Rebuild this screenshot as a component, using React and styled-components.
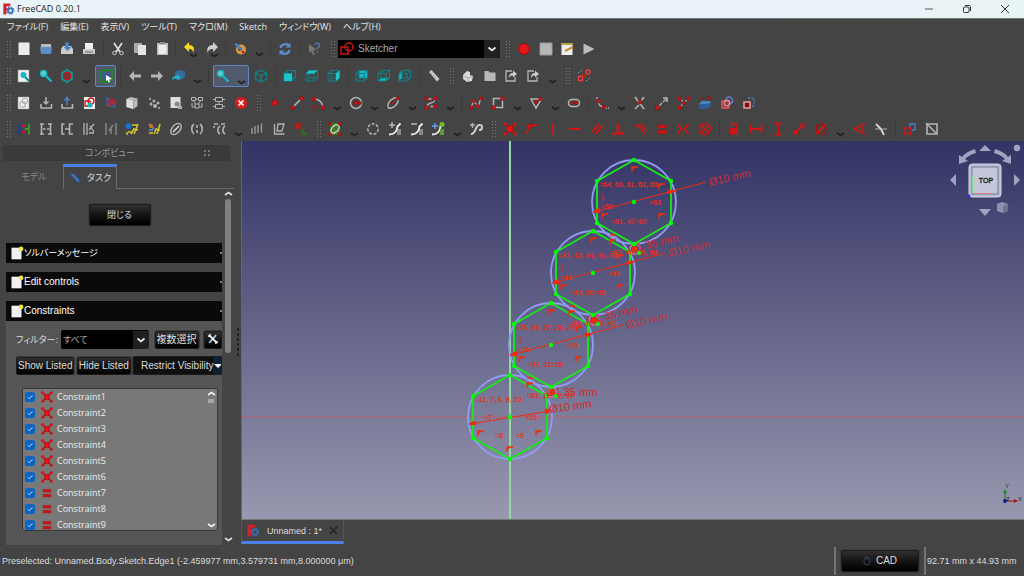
import React from 'react';
import styled, { createGlobalStyle, css } from 'styled-components';

const RED = '#d01515';
const DARK_RED = '#a31010';
const GREY = '#b4b4b4';
const TEAL = '#18b9c0';
const BLUE = '#4a80c4';
const SKETCH_RED = '#f02a0c';

const GlobalStyle = createGlobalStyle`
  * {
    box-sizing: border-box;
  }

  body {
    margin: 0;
    background: #444;
  }

  button, input, select {
    font: inherit;
    color: inherit;
  }
`;

const Window = styled.div`
  display: flex;
  flex-direction: column;
  min-height: 100vh;
  background: #444;
  color: #ddd;
  font-family: "Liberation Sans", "Noto Sans CJK JP", sans-serif;
  font-feature-settings: "palt";
  font-size: 10px;
  line-height: 14px;
`;

const TitleBar = styled.header`
  display: flex;
  align-items: center;
  height: 19px;
  padding-left: 1px;
  background: linear-gradient(90deg, #e9f4f8, #eaf2fa 60%, #e9f4f6);
  border-bottom: 1px solid #777;
  color: #222;
  font-family: "Open Sans", sans-serif;
`;

const AppTitle = styled.h1`
  flex: 1;
  margin: 0 0 0 2px;
  font-size: 9px;
  font-weight: 400;
`;

const CaptionButton = styled.button`
  display: grid;
  place-items: center;
  width: 38px;
  height: 18px;
  padding: 0;
  border: 0;
  background: none;
  color: #333;
`;

const MenuBar = styled.nav`
  display: flex;
  gap: 12px;
  height: 16px;
  padding-left: 7px;
  font-family: "Open Sans", "Noto Sans CJK JP", sans-serif;
`;

const MenuItem = styled.button`
  padding: 0;
  border: 0;
  background: none;
  color: #e4e4e4;
  font-size: 9px;
  line-height: 16px;
  white-space: nowrap;
`;

const Toolbars = styled.div`
  display: flex;
  flex-direction: column;
`;

const ToolRow = styled.div`
  display: flex;
  align-items: center;
  height: 27px;
  padding-left: 5px;

  &:last-child {
    height: 25px;
  }
`;

const Tool = styled.button`
  position: relative;
  display: flex;
  align-items: center;
  justify-content: center;
  flex: none;
  width: 22px;
  height: 22px;
  padding: 0;
  border: 1px solid transparent;
  border-radius: 2px;
  background: none;

  &:nth-child(3n) {
    width: 21px;
  }

  ${({ $active }) => $active && css`
    margin: 0 1px;
    border-color: #6286c4;
    background: #515a6c;
  `}

  ${({ $wide }) => $wide && css`
    && {
      width: 36px;
    }
    justify-content: flex-start;
  `}
`;

const Separator = styled.span`
  flex: none;
  width: 1px;
  height: 16px;
  margin: 0 3px;
  background: #3b3b3b;
`;

const Grip = styled.span`
  flex: none;
  width: 5px;
  height: 18px;
  margin: 0 3px 0 5px;
  background: radial-gradient(circle, #777 1px, transparent 1px) 0 0 / 3px 3px;

  &:first-child {
    margin: 0 2px 0 1px;
  }
`;

const DropArrow = styled.button`
  display: flex;
  align-items: flex-end;
  justify-content: center;
  flex: none;
  width: 16px;
  height: 18px;
  padding: 0;
  border: 0;
  background: none;
`;

const ArrowOverlay = styled.span`
  position: absolute;
  right: 2px;
  bottom: 0;
  display: flex;
`;

const WorkbenchBox = styled.label`
  display: flex;
  align-items: center;
  flex: none;
  width: 162px;
  height: 18px;
  background: #000;
`;

const DarkSelect = styled.select`
  flex: 1;
  min-width: 0;
  height: 100%;
  padding: 0 0 0 2px;
  border: 0;
  border-radius: 2px;
  appearance: none;
  background: url('data:image/svg+xml;utf8,<svg xmlns="http://www.w3.org/2000/svg" width="16" height="18"><rect width="16" height="18" fill="%23202020"/><path d="M4.500 7.500l3.500 3 3.500-3" fill="none" stroke="%23eee" stroke-width="1.700"/></svg>') right center no-repeat #000;
  color: #aaa;
  font-size: ${({ $small }) => ($small ? '9px' : '10px')};
`;

const Workspace = styled.div`
  display: flex;
  flex: 1;
`;

const Dock = styled.aside`
  display: flex;
  flex-direction: column;
  flex: none;
  width: 234px;
`;

const DockTitle = styled.div`
  display: flex;
  align-items: center;
  height: 16px;
  margin: 4px 4px 3px 3px;
  padding-right: 19px;
  background: #3a3a3a;
  color: #999;
  font-size: 9px;

  span {
    flex: 1;
    padding-left: 14px;
    text-align: center;
  }
`;

const TabList = styled.div`
  display: flex;
  height: 25px;
  border-bottom: 1px solid #6a6a6a;
`;

const DockTab = styled.button`
  display: flex;
  align-items: center;
  justify-content: center;
  gap: 6px;
  width: ${({ $active }) => ($active ? '54px' : '63px')};
  height: 25px;
  padding: ${({ $active }) => ($active ? '0' : '0 0 0 5px')};
  border: ${({ $active }) => ($active ? '1px solid #6a6a6a' : '0')};
  border-top: ${({ $active }) => ($active ? '3px solid #4c7fe8' : '0')};
  border-bottom: 0;
  background: #444;
  color: ${({ $active }) => ($active ? '#ddd' : '#888')};
  font-size: 9px;
`;

const DockScroll = styled.div`
  display: flex;
  flex: 1;
  padding-left: 6px;
`;

const TaskColumn = styled.div`
  display: flex;
  flex-direction: column;
  flex: 1;
  min-width: 0;
`;

const ScrollBar = styled.div`
  display: flex;
  flex-direction: column;
  align-items: center;
  flex: none;
  width: 12px;
  padding: 1px 0 2px;

  span {
    width: 6px;
    height: 154px;
    margin: 2px 0 auto;
    border-radius: 3px;
    background: #808080;
  }
`;

const darkButton = css`
  border: 1px solid #1c1c1c;
  border-radius: 2px;
  background: linear-gradient(#303030, #121212 55%, #000);
  box-shadow: 0 0 0 1px #3c3c3c;
  color: #ddd;
`;

const CloseButton = styled.button`
  ${darkButton}
  align-self: center;
  width: 62px;
  height: 22px;
  margin: 15px 0 17px 11px;
  padding: 0;
  font-size: 9px;
`;

const SectionHeader = styled.h2`
  display: flex;
  align-items: center;
  height: 20px;
  margin: 0 0 ${({ $open }) => ($open ? '0' : '9px')};
  padding-left: 3px;
  background: #0a0a0a;
  color: #fff;
  font-size: 10px;
  font-weight: 400;

  span {
    flex: 1;
  }

  span:lang(ja) {
    font-size: 9px;
  }
`;

const CollapseMark = styled.i`
  width: 2px;
  height: 2px;
  border-radius: 1px;
  background: #aaa;
`;

const SectionBody = styled.div`
  display: flex;
  flex: 1;
  flex-direction: column;
  gap: 7px;
  padding: 9px 0 0 10px;
  background: #555;
`;

const ControlRow = styled.div`
  display: flex;
  align-items: center;
  justify-content: space-between;
  height: 19px;
  overflow: hidden;
`;

const FilterField = styled.div`
  display: flex;
  align-items: center;
  width: 133px;
  height: 19px;
`;

const FilterLabel = styled.label`
  width: 45px;
  font-size: 9px;
  white-space: nowrap;
`;

const SmallButton = styled.button`
  ${darkButton}
  flex: none;
  height: 18px;
  padding: 0 1px;
  line-height: 16px;
  white-space: nowrap;
`;

const VisibilityButton = styled(SmallButton)`
  display: flex;
  align-items: center;
  justify-content: space-between;
  width: 89px;
  height: 19px;
  padding: 0 0 0 7px;
  background: linear-gradient(90deg, transparent 79px, #0c2236 79px), #101010;
`;

const ConstraintPanel = styled.div`
  display: flex;
  height: 143px;
  margin: 6px 4px 0 6px;
  border: 1px solid #383838;
  border-radius: 2px;
  background: #787878;
  overflow: hidden;
`;

const ConstraintList = styled.ul`
  flex: 1;
  margin: 0;
  padding: 0;
  list-style: none;
  color: #eee;
  font-family: "Open Sans", sans-serif;
  font-size: 9px;
`;

const ConstraintRow = styled.li`
  label {
    display: flex;
    align-items: center;
    height: 16px;
    padding-left: 2px;
  }

  svg {
    margin: 0 2px 0 4px;
  }
`;

const CheckBox = styled.input`
  width: 10px;
  height: 10px;
  margin: 0;
  border-radius: 2px;
  appearance: none;
  background: url('data:image/svg+xml;utf8,<svg xmlns="http://www.w3.org/2000/svg" width="10" height="10"><path d="M2.800 5.200l1.500 1.500 3-3.200" fill="none" stroke="%23cfe4f7"/></svg>') center no-repeat #0a66c2;
`;

const ListScroll = styled.div`
  display: flex;
  flex-direction: column;
  align-items: center;
  width: 12px;
  padding: 1px 0;

  span {
    width: 6px;
    height: 4px;
    margin: 2px 0 auto;
    background: #a8a8a8;
  }
`;

const Splitter = styled.div`
  display: flex;
  align-items: center;
  justify-content: center;
  width: 7px;

  span {
    width: 2px;
    height: 30px;
    background: repeating-linear-gradient(#222 0 3px, transparent 3px 5px);
  }
`;

const Documents = styled.main`
  display: flex;
  flex: 1;
  flex-direction: column;
  min-width: 0;
`;

const Viewport = styled.div`
  display: flex;
  flex: 1;
  border-left: 1px solid #667;
  border-bottom: 1px solid #777;
  background: linear-gradient(#333365, #9898b0);
`;

const Canvas = styled.svg`
  display: block;
  width: 100%;
  height: 100%;
`;

const DocumentTabs = styled.div`
  display: flex;
  height: 25px;
`;

const DocumentTab = styled.button`
  display: flex;
  align-items: center;
  width: 103px;
  height: 24px;
  padding: 0 5px 0 3px;
  border: 1px solid #555;
  border-top: 0;
  border-bottom: 3px solid #4c7fe8;
  background: #444;
  color: #ddd;
  font-size: 9px;

  span {
    flex: 1;
  }
`;

const StatusBar = styled.footer`
  display: flex;
  align-items: center;
  height: 31px;
  padding: 0 10px 0 2px;
  font-size: 9px;

  p {
    flex: 1;
    margin: 0;
  }
`;

const StatusDivider = styled.span`
  width: 2px;
  height: 28px;
  background: #757575;
`;

const NavButton = styled.button`
  ${darkButton}
  display: flex;
  align-items: center;
  justify-content: center;
  gap: 5px;
  width: 78px;
  height: 22px;
  margin: 0 5px;
  padding: 0;
  font-size: 10px;
`;

const StatusSize = styled.output`
  width: 88px;
  padding-left: 1px;
  white-space: nowrap;
`;

const Dot = ({ x, y, r = 2, c = RED }) => <circle cx={x} cy={y} r={r} fill={c} stroke="#7a0c0c" strokeWidth=".5" />;

const Line = ({ d, c = GREY, w = 1.3, dash }) => (
  <path d={d} fill="none" stroke={c} strokeWidth={w} strokeDasharray={dash} />
);

const Cube = ({ fill, back }) => (
  <>
    {back && <path d={fill} fill={TEAL} />}
    <Line d="M3 6.500h8v7.500h-8zM3 6.500l3-3h8.500l-3.500 3M14.500 3.500v7.500l-3.500 3M6 3.500v7.500h8.500M6 11l-3 3" c="#108087" w={1} />
    {!back && <path d={fill} fill="#1cc4cb" />}
  </>
);

const Page = ({ x = 3, y = 3 }) => <path d={`M${x} ${y}h11v12h-11z`} fill="#eee" stroke="#999" strokeWidth=".5" />;

const Arc = ({ children }) => (
  <>
    <path d="M11 9h4v6h-4z" fill="#888" />
    <Line d="M3 14.500c5 0 8-3 8.500-8l3-3" c="#e8e8e8" w={2} />
    {children}
  </>
);

// every drawing uses an 18 x 18 box
const icons = {
  newDoc: <path d="M3.500 2.500h11v12.500h-11z" fill="#ececec" />,
  open: <><path d="M4 4h10v6h-10z" fill="#bbb" /><path d="M3 7h12l-1 7h-10z" fill="#5e8ec4" /></>,
  save: <><path d="M3 9l2-3h8l2 3v5h-12z" fill="#ccc" /><path d="M7 2l4 1v4h2.500l-4 4-4-4h2z" fill={BLUE} /></>,
  print: <><path d="M5 3h8v6h-8z" fill="#eee" /><path d="M3 9h12v5h-12z" fill="#ccc" /><path d="M5 12h8" stroke="#666" /></>,
  cut: <><Line d="M5 3l6 9M13 3l-6 9" c="#e4e4e4" w={1.600} /><circle cx="5.500" cy="13" r="1.800" fill="none" stroke="#ccc" /><circle cx="12.500" cy="13" r="1.800" fill="none" stroke="#ccc" /></>,
  copy: <><path d="M3 3h8v10h-8z" fill="#aaa" /><path d="M7 5h8v10h-8z" fill="#e4e4e4" /></>,
  paste: <><path d="M4 3h11v12h-11z" fill="#bbb" /><path d="M7 2h5v2h-5z" fill="#888" /><path d="M5.500 5h8v9h-8z" fill="#eee" /></>,
  undo: <path d="M3 7l5-5v3c5 0 6 4 4 8 0-3-1-4-4-4v3z" fill="#f4d820" />,
  redo: <path d="M15 7l-5-5v3c-5 0-7 4-5 8 0-3 2-4 5-4v3z" fill="#ccc" />,
  palette: <><circle cx="10" cy="9.500" r="5" fill="#db9a3f" /><circle cx="9" cy="9" r="2" fill="#444" /><path d="M3 4l3-1 6 7-2 1z" fill={BLUE} /><circle cx="12" cy="12" r="1.300" fill={RED} /></>,
  refresh: <><Line d="M4.500 8a5 4.500 0 0 1 9-2M13.500 10a5 4.500 0 0 1-9 2" c="#5a8fd6" w={2.200} /><path d="M14.500 3v4.500h-5zM3.500 15v-4.500h5z" fill="#5a8fd6" /></>,
  whatsThis: <><path d="M4 4l8 6-4 .5 2 4-2 .6-2-4-2 2z" fill="#777" /><Line d="M10 5c0-2.500 5-2.500 4.500.5-.3 1.500-2 1.500-2 3.500M12.500 11v1.500" c="#4e7aa8" w={1.600} /></>,
  record: <circle cx="9" cy="9" r="5.500" fill="#e01818" stroke="#8f1010" />,
  stop: <path d="M3 3h12v12h-12z" fill="#b6b6b6" stroke="#999" />,
  macroEdit: <><path d="M3.500 3h11v12h-11z" fill="#eee" /><path d="M3.500 3h11v2h-11z" fill="#b8a24a" /><Line d="M7 11l8-4" c="#c98a3a" w={2} /></>,
  play: <path d="M3.500 3.500l11 5.500-11 5.500z" fill="#bcbcbc" />,
  fitAll: <><Page /><circle cx="8.500" cy="8" r="3" fill={TEAL} /><Line d="M10 10l4 4" c="#0c8a90" w={2} /></>,
  zoom: <><circle cx="6.500" cy="6.500" r="3" fill="#6cc" stroke={TEAL} strokeWidth="1.500" /><Line d="M9 9l5.500 5.500" c={TEAL} w={2.400} /></>,
  drawStyle: <><path d="M9 3l5 3v6l-5 3-5-3v-6z" fill="none" stroke="#14979e" strokeWidth="1.600" /><circle cx="9" cy="9" r="3.500" fill="none" stroke={RED} strokeWidth="1.300" /><Line d="M6.500 6.500l5 5" c={RED} /></>,
  boxSelect: <><path d="M3 6l4-3h8v8l-3 4h-9z" fill="none" stroke="#1c8a2c" strokeWidth="1.800" /><circle cx="9" cy="9" r="4" fill="#385f94" /><path d="M9 8l6 4-3 .5 1 2.500-1.500.5-1-2.500-1.500 1z" fill="#fff" /></>,
  back: <path d="M3 9l5-5v3.500h7v3h-7v3.500z" fill="#b4b4b4" />,
  forward: <path d="M15 9l-5-5v3.500h-7v3h7v3.500z" fill="#b4b4b4" />,
  linkGo: <><path d="M6 5l4-2 6 1v6l-4 3-6-1z" fill="#356b9c" /><path d="M3 14c0-4 2-5 5-5v-2l4 3.500-4 3v-2c-2 0-4 0-5 2.500z" fill={TEAL} /></>,
  iso: <Line d="M9 3l5.500 3v6l-5.500 3-5.500-3v-6zM3.500 6l5.500 3 5.500-3M9 9v6" c="#108087" />,
  front: <Cube fill="M3 6.500h8v7.500h-8z" />,
  top: <Cube fill="M3 6.500l3-3h8.500l-3.500 3z" />,
  right: <Cube fill="M14.500 3.500v7.500l-3.500 3v-7.500z" />,
  rear: <Cube back fill="M6 3.500h8.500v7.500h-8.500z" />,
  bottom: <Cube back fill="M6 11h8.500l-3.500 3h-8z" />,
  left: <Cube back fill="M6 3.500v7.500l-3 3v-7.500z" />,
  measure: <><path d="M4 5l2.500-2 8 9-2.500 2.500z" fill="#ccc" /><Line d="M6 7l1.500-1M8 9l1.500-1M10 11l1.500-1" c="#777" w={.7} /></>,
  part: <><path d="M4 8l4-4 3 1v3l3 1-1 5-5 1-4-3z" fill="#d8d8d8" /><Line d="M4 9l5 2 4-1.500M9 11v3" c="#999" w={.7} /></>,
  group: <path d="M3.500 4h4l1 1.500h6v8.500h-11z" fill="#b8b8b8" />,
  linkMake: <><Line d="M10 4h-6v10h9v-4" /><path d="M7 11c0-4 2-5 4-5v-2.500l4 3.500-4 3.500v-2c-2 0-3 .5-4 2.500z" fill="#ccc" /></>,
  validate: <><path d="M3.500 9.500h4v4h-4z" fill="none" stroke="#f23c3c" strokeWidth="1.300" /><circle cx="9" cy="9" r="2" fill={RED} /><circle cx="13" cy="5" r="2" fill="none" stroke="#f23c3c" strokeWidth="1.300" /><Line d="M3 6l4-3M11 14l4-3" w={.8} dash="1.500" /></>,
  sketchNew: <><Page /><circle cx="10" cy="7" r="2.800" fill="none" stroke="#aaa" /><path d="M5 8h5v5h-5z" fill="none" stroke="#aaa" /></>,
  importBox: <><Line d="M4 10v4h10.500v-4" w={1.600} /><Line d="M9 3v7M6.500 7.500l2.500 2.500 2.500-2.500" w={1.500} /></>,
  exportBox: <><Line d="M4 10v4h10.500v-4" w={1.600} /><Line d="M9 11v-7M6.500 6.500l2.500-3 2.500 3" c={BLUE} w={1.600} /></>,
  sketchView: <><path d="M4 3h11v12h-11z" fill="#eee" /><circle cx="11" cy="7" r="3" fill="none" stroke={RED} strokeWidth="1.300" /><path d="M5 7h5v5h-5z" fill="none" stroke={RED} strokeWidth="1.300" /><circle cx="10" cy="11" r="2.500" fill={TEAL} /></>,
  attach: <><path d="M4 3l10 3v8l-10-2z" fill="#365f91" /><circle cx="10" cy="8" r="2.500" fill="none" stroke={RED} strokeWidth="1.300" /><path d="M6 7h4v4h-4z" fill="none" stroke={RED} /></>,
  solid: <><path d="M3.500 5l4-2 7 1.500v7.500l-4 3-7-2z" fill="#bbb" /><path d="M3.500 5l7 2v8l-7-2z" fill="#ddd" /><Line d="M10.500 7v8M10.500 7l4-2.500" c="#888" w={.7} /></>,
  points: <><circle cx="5" cy="5" r="1" fill={GREY} /><circle cx="9" cy="7" r="1.500" fill={GREY} /><circle cx="13" cy="9" r="1.500" fill={GREY} /><circle cx="6" cy="10" r="1.500" fill={GREY} /><circle cx="10" cy="12" r="2" fill={GREY} /><circle cx="14" cy="14" r="1" fill={GREY} /></>,
  pageLink: <><path d="M3.500 3h10v11h-10z" fill="#ddd" /><circle cx="10" cy="10" r="2.500" fill="#888" /><path d="M11 12h4v3h-4z" fill="#aaa" /></>,
  merge: <Line d="M3.500 3.500h4v3h-4zM10.500 3.500h4v3h-4zM7.500 5h3M5.500 7l2 3M12.500 7l-2 3M7 10h4v4h-4zM4 9v4h3M14 9v4h-3" w={1} />,
  mirror: <Line d="M5.500 3.500h7v4h-7zM3 5.500h2.500M12.500 5.500h2.500M5.500 10.500h7v4h-7zM3 12.500h2.500M12.500 12.500h2.500M9 7.500v3" w={1} />,
  cancel: <><circle cx="9" cy="9" r="6" fill="#e01a1a" /><Line d="M6.500 6.500l5 5M11.500 6.500l-5 5" c="#fff" w={1.700} /></>,
  point: <Dot x={9} y={9} r={3} />,
  line: <><Line d="M4.500 13.500l9-9" w={1.600} /><Dot x={4.500} y={13.500} /><Dot x={13.500} y={4.500} /></>,
  arc: <><Line d="M5 5c5 0 8 3 9 8" w={1.600} /><Dot x={5} y={5} /><Dot x={14} y={13.500} /><Dot x={5.500} y={13} r={1.700} /></>,
  circle: <><circle cx="9" cy="9" r="5.500" fill="none" stroke={GREY} strokeWidth="1.500" /><Dot x={9} y={9} /><Dot x={13} y={9} r={1.600} /></>,
  ellipse: <><ellipse cx="9" cy="9" rx="6.500" ry="3.500" transform="rotate(-45 9 9)" fill="none" stroke={GREY} strokeWidth="1.500" /><Dot x={8.500} y={9} r={1.600} /><Dot x={13.500} y={4.500} r={1.600} /></>,
  spline: <><Line d="M4.500 13.500c1-7 8-2 9-9M4.500 5h5M13.500 12.500h-5" /><Dot x={4.500} y={5} r={1.900} /><Dot x={13.500} y={4.500} r={1.900} /><Dot x={4.500} y={13.500} r={1.900} /><Dot x={13.500} y={12.500} r={1.900} /></>,
  polyline: <><Line d="M4 13l3-6 4 6 3-9" /><Dot x={4} y={13.500} r={1.800} /><Dot x={7} y={7} r={1.800} /><Dot x={10.500} y={12} r={1.800} /><Dot x={14} y={4.500} r={1.800} /></>,
  rect: <><path d="M4.500 4.500h9v9h-9z" fill="none" stroke={GREY} strokeWidth="1.500" /><Dot x={4.500} y={13.500} /><Dot x={13.500} y={4.500} /></>,
  triangle: <><path d="M4 5h10.500l-5.500 9z" fill="none" stroke={GREY} strokeWidth="1.500" /><Dot x={9} y={8} r={1.800} /><Dot x={13.500} y={5} r={1.800} /></>,
  slot: <><rect x="3.500" y="5.500" width="11" height="7" rx="3.500" fill="none" stroke={GREY} strokeWidth="1.500" /><Dot x={7} y={9} r={1.600} /><Dot x={11.500} y={9} r={1.600} /></>,
  fillet: <><Line d="M4 3v3M12 14h4" dash="2 1" /><Line d="M5 6c0 5 3 7 7 7" /><Dot x={5.500} y={7} /><Dot x={11} y={13} /></>,
  trim: <><Line d="M4 3l9 12M13 3l-3 4M8 11l-4 4" w={1.600} /><Dot x={9} y={8} /></>,
  extend: <><Line d="M5 13l4-4M10 8l3-3" /><Line d="M10 4h4v4" w={1.600} /><Dot x={4.500} y={13.500} r={2.300} /></>,
  split: <><Line d="M4 14l10-10M5 4l4 5" dash="2 1" /><Dot x={4.500} y={4.500} r={1.900} /><Dot x={13.500} y={4.500} r={1.900} /><Dot x={4.500} y={13.500} r={1.900} /><Dot x={9} y={9} r={1.700} /></>,
  external: <><path d="M3 10l3-3h8l1 3-3 4h-9z" fill="#4d83c0" /><path d="M3 10h8l4-1v3l-4 3h-8z" fill="#2c5f9b" /><Dot x={7} y={4} r={1} /><Dot x={13} y={4} r={1.500} /></>,
  carbon: <><circle cx="11" cy="6.500" r="3.500" fill="none" stroke="#6c7ed0" strokeWidth="1.500" /><path d="M4 7h7v7h-7z" fill="#844" stroke="#e45a5a" strokeWidth="1.300" /><circle cx="9" cy="9" r="3" fill="none" stroke="#e9a0b0" /></>,
  construct: <><path d="M4 8h6v6h-6z" fill="#7a1010" stroke="#f0a0a0" strokeWidth="1.500" /><Line d="M8 4h6v8h-3" c={BLUE} dash="2 1.500" /></>,
  coincLine: <><path d="M3 4h3v10h-3z" fill="#273e7a" /><Line d="M6 6h5M6 12h5" c={RED} w={2.200} /><Line d="M10 9h4M14 3.500v11" c="#2d9d2d" w={1.800} /></>,
  brackets: <Line d="M7 4h-2.500v10h2.500M11 4h2.500v10h-2.500M6 9h2.500M10 9h2.500M3 4h1.500M3 14h1.500M15 4h-1.500M15 14h-1.500" w={1.600} />,
  bracketOpen: <Line d="M6.500 4h-2.500v10h2.500M15 4h-3.500v10h3.500M7 9h4" w={1.600} />,
  barsX: <Line d="M4 3v12M7 3v12M9 10l5-6M10 6l4 6M9 13h5" w={1.300} />,
  bars: <Line d="M4 3v12M14 3v12M7 11l4-6M9 7v7" c="#8a8a8a" w={1.400} />,
  splineInfo: <><circle cx="5.500" cy="6" r="3" fill="#1a72c4" /><Line d="M9 5h5M5 12h4M8 14l3-5 4 1M11 14l4-10M4 12v3" c="#cfc12c" w={1.600} /></>,
  splineEdit: <><Line d="M4 4l5 5M4 10h4" c={BLUE} w={2} /><Line d="M9 14l2-5 4 1M12 14l3-10M4 13h4" c="#cfc12c" w={1.600} /><circle cx="6" cy="6" r="2" fill="#e07018" /></>,
  ring: <><ellipse cx="9" cy="9" rx="6.500" ry="4" transform="rotate(-50 9 9)" fill="none" stroke={GREY} strokeWidth="1.500" /><Line d="M6 12l6-6" c="#eee" /></>,
  brackets2: <Line d="M6 4c-3 2-3 8 0 10M12 4c3 2 3 8 0 10M9 5v3M9 10v3" w={1.600} />,
  brackets3: <Line d="M4 4h4M10 6c-3 2-3 6 0 8M15 6c-3 2-3 6 0 8M3 7h2M11 4h4" w={1.600} />,
  bars3: <Line d="M4 8v6M7 6v8M10 5v8M13.500 3.500v9" c="#999" w={1.400} />,
  axisCopy: <><Line d="M4.500 4v10h10" w={1.300} /><Line d="M8 4h6l-2 7h-5z" /></>,
  deleteAll: <><Line d="M3 3l6 6M9 3l-6 6" c={RED} w={2} /><path d="M9 9h3v3h3v3h-6z" fill="#2e6b22" /></>,
  bspline: <><path d="M4 3h10v12h-10z" fill="#3e7a2a" /><ellipse cx="9" cy="9" rx="5" ry="3" transform="rotate(-45 9 9)" fill="none" stroke="#ddd" strokeWidth="1.300" /><Dot x={4} y={4} r={1.600} /><Dot x={14} y={4} r={1.600} /><Dot x={4} y={14} r={1.600} /><Dot x={14} y={14} r={1.600} /></>,
  dashedRing: <circle cx="9" cy="9" r="5.200" fill="none" stroke={GREY} strokeWidth="1.500" strokeDasharray="3 1.500" />,
  knotAdd: <Arc><Line d="M3 5h6M6 2v6" w={1.500} /></Arc>,
  knotDel: <Arc><Line d="M3 4h6" w={1.500} /></Arc>,
  knotBlue: <Arc><Line d="M3 6h6M6 3v6" c="#5b91d8" w={1.800} /><circle cx="13" cy="4.500" r="2.500" fill="#6fbe2c" /><path d="M11 9h4v6h-4z" fill="#5a9a2a" /></Arc>,
  join: <><Line d="M3 5h5M5.500 3v5" w={1.400} /><Line d="M4 14c5 0 4-8 8-9s4 5 0 5" c="#ccc" w={2} /></>,
  coincident: <><Line d="M4 4l10 10M14 4l-10 10" c={DARK_RED} w={1.500} /><Line d="M3 3l2.500 2.500M15 3l-2.500 2.500M3 15l2.500-2.500M15 15l-2.500-2.500" c={RED} w={2.800} /><circle cx="9" cy="9" r="3.200" fill="#e81010" stroke={DARK_RED} strokeWidth=".5" /></>,
  onCurve: <><Line d="M4 14c0-6 4-9 10-9" c={RED} w={1.800} /><Dot x={6} y={6} r={2.300} /></>,
  vertical: <Line d="M9 3.500v11" c={RED} w={2} />,
  horizontal: <Line d="M3.500 9h11" c={RED} w={2} />,
  parallel: <Line d="M4 12l7-8M7.500 14l7-8" c={RED} w={2} />,
  perpendicular: <Line d="M9 3.500v10M3.500 13.500h11" c={RED} w={2.400} />,
  tangent: <Line d="M3.500 4.500l6 3 5 7M8 4c4 1 6 3 7 6" c={RED} w={1.800} />,
  equal: <path d="M4.500 5h9v3h-9zM4.500 10.500h9v3h-9z" fill={RED} stroke={DARK_RED} strokeWidth=".5" />,
  symmetric: <Line d="M3.500 4l4 5-4 5M14.500 4l-4 5 4 5" c={RED} w={1.900} />,
  block: <><circle cx="9" cy="9" r="5.500" fill="none" stroke={RED} strokeWidth="1.500" /><Line d="M5 5l8 8M13 5l-8 8" c={RED} /></>,
  lock: <><path d="M5 8h8v6.500h-8z" fill={RED} /><Line d="M6.500 8v-2.500c0-3 5-3 5 0v2.500" c={RED} w={1.500} /></>,
  hDist: <Line d="M3.500 5v8M14.500 5v8M3.500 9h11" c={RED} w={1.800} />,
  vDist: <Line d="M5.500 3.500h7M5.500 14.500h7M9 3.500v11" c={RED} w={1.800} />,
  dist: <><Line d="M5 13l8-8" c={RED} w={2} /><path d="M9 3.500h5.500v5.500zM3.500 9v5.500h5.500z" fill={RED} /></>,
  diameter: <><circle cx="9" cy="9" r="5" fill="none" stroke={DARK_RED} strokeWidth="1.700" /><Line d="M4 14l10-10" c={RED} w={1.800} /></>,
  angle: <Line d="M15 4l-11 5 11 5M11 6c1.500 2 1.500 4 0 6" c={RED} w={1.500} />,
  snell: <><Line d="M3 9h12" c="#888" w={1.600} /><Line d="M4 4l5 5 3 6" c="#d8d8d8" w={1.800} /></>,
  driving: <><path d="M9 4h5v6h-5z" fill="none" stroke={BLUE} strokeWidth="1.300" /><path d="M4 8h6v6h-6z" fill="#444" stroke={RED} strokeWidth="1.600" /></>,
  activate: <><path d="M4 4h10v10h-10z" fill="none" stroke={GREY} strokeWidth="1.600" /><Line d="M3 3l11 11" w={1.500} /></>,
  sketcher: <><path d="M3 7h7v7h-7z" fill="none" stroke={RED} strokeWidth="1.500" /><circle cx="11" cy="7" r="4" fill="none" stroke={RED} strokeWidth="1.500" /></>,
  note: <><path d="M3 2h12v14h-12z" fill="#f2f2f2" /><circle cx="14.500" cy="3.500" r="2.800" fill="#f5e63c" /></>,
  pencil: <path d="M2 4l4-3 9 9 2 6-5.500-1.500z" fill="#3f72ac" stroke="#1c3d63" strokeWidth=".8" />,
  tools: <><Line d="M4 14l9-10" c="#9fc7f0" w={2.200} /><Line d="M4 4l10 10" c="#fff" w={2.200} /><Line d="M3 6l3-3M12 15l3-3" c="#fff" w={2} /></>,
  logo: <><path d="M3 2h9v3.500h-5v2.500h4v3h-4v5h-4z" fill="#d8202a" /><circle cx="12" cy="11" r="3" fill="none" stroke="#3b6cb0" strokeWidth="2" /><circle cx="12" cy="11" r="4.600" fill="none" stroke="#3b6cb0" strokeWidth="1.400" strokeDasharray="1.800 1.800" /></>,
};

const Icon = ({ name, size = 18 }) => (
  <svg width={size} height={size} viewBox="0 0 18 18" aria-hidden="true">{icons[name]}</svg>
);

const Chevron = ({ color = '#222', up }) => (
  <svg width="9" height="7" viewBox="0 0 9 7" aria-hidden="true">
    <path d={up ? 'M1 5l3.500-2.500 3.500 2.500' : 'M1 2l3.500 2.500 3.500-2.500'} fill="none" stroke={color} strokeWidth="1.800" />
  </svg>
);

// "|" separator, ":" grip, "v" drop arrow; "+" overlays an arrow, "!" marks a pressed tool
const rows = [
  ': newDoc open save print | cut copy paste | undo+ redo+ | palette v | refresh | whatsThis : workbench : record stop macroEdit play',
  ': fitAll zoom drawStyle v boxSelect! | back forward linkGo v | zoom!+ iso | front top right | rear bottom left | measure : part group linkMake linkMake v : validate',
  ': sketchNew importBox exportBox sketchView attach solid points pageLink merge mirror cancel : point line arc v circle v ellipse v spline v | polyline rect v triangle v slot | fillet v trim extend split external carbon construct',
  ': coincLine brackets bracketOpen barsX bars splineInfo splineEdit ring brackets2 brackets3 v bars3 axisCopy deleteAll : bspline v dashedRing knotAdd knotDel knotBlue v join : coincident onCurve vertical horizontal parallel perpendicular tangent equal symmetric block | lock hDist vDist dist diameter v angle snell | driving activate',
];

function renderTool(token, i) {
  if (token === '|') return <Separator key={i} />;
  if (token === ':') return <Grip key={i} />;
  if (token === 'v') return <DropArrow key={i} aria-label="More"><Chevron /></DropArrow>;
  if (token === 'workbench') {
    return (
      <WorkbenchBox key={i}>
        <Icon name="sketcher" />
        <DarkSelect aria-label="Workbench" defaultValue="Sketcher"><option>Sketcher</option></DarkSelect>
      </WorkbenchBox>
    );
  }
  const name = token.replace(/[!+]/g, '');
  const active = token.includes('!');
  const arrow = token.includes('+');
  return (
    <Tool key={i} aria-label={name} $active={active} $wide={active && arrow}>
      <Icon name={name} />
      {arrow && <ArrowOverlay><Chevron /></ArrowOverlay>}
    </Tool>
  );
}

const menus = ['ファイル(F)', '編集(E)', '表示(V)', 'ツール(T)', 'マクロ(M)', 'Sketch', 'ウィンドウ(W)', 'ヘルプ(H)'];

const hexagons = [
  { x: 510, y: 417, top: '=11, 7, 8, 9, 10', left: '=7', right: '=10' },
  { x: 551, y: 345, top: '=30, 26, 27, 28, 29', left: '=26', right: '=29', low: '=27, 11=28', joint: '=81, 11=82, 92', flat: true },
  { x: 593, y: 273, top: '=47, 43, 44, 45, 46', left: '=43', right: '=46', low: '=44, 30=45', joint: '=89, 40=90, 90' },
  { x: 634, y: 202, top: '=64, 60, 61, 62, 63', left: '=60', right: '=63', low: '=61, 47=62', joint: '=97, 40=96, 98' },
];

const points = [[0, -42], [37, -21], [37, 21], [0, 42], [-37, 21], [-37, -21]];

const Corner = ({ x, y }) => <path d={`M${x} ${y + 5}v-5h6M${x} ${y + 2}l4-2`} fill="none" stroke={SKETCH_RED} strokeWidth="1.300" />;

const Mark = ({ x, y, children }) => (
  <text x={x} y={y} fontSize="7" fill={SKETCH_RED} stroke={SKETCH_RED} strokeWidth=".2">{children}</text>
);

function Hexagon({ x, y, top, left, right, low, joint, flat }) {
  return (
    <g transform={`translate(${x} ${y})`}>
      <circle r="42" fill="none" stroke="#8f9df0" strokeWidth="1.800" />
      <polygon points={points.join(' ')} fill="none" stroke="#14ec14" strokeWidth="1.800" />
      <Mark x={-35} y={-15}>{top}</Mark>
      {low ? (
        <>
          <Corner x={-2} y={-35} />
          <Corner x={25} y={-18} />
          <path d="M-31-8v7" stroke={SKETCH_RED} />
          <Mark x={-33} y={7}>{left}</Mark>
          <Mark x={15} y={3}>{right}</Mark>
          <Corner x={-32} y={12} />
          <Corner x={25} y={12} />
          <Mark x={-23} y={22}>{low}</Mark>
          <path d="M-40 10L72-20" stroke={SKETCH_RED} />
          <path d="M-41 10l6-4 1 5zM41-11l-7-1 1 4z" fill={SKETCH_RED} stroke={SKETCH_RED} />
          <text transform="translate(76 -16) rotate(-13)" fontSize="11" fill="#c8303a">Ø10 mm</text>
        </>
      ) : (
        <>
          <Mark x={-26} y={3}>{left}</Mark>
          <Mark x={15} y={3}>{right}</Mark>
          <Corner x={-32} y={14} />
          <Corner x={26} y={14} />
          <Corner x={-3} y={30} />
          <Mark x={-15} y={21}>=8</Mark>
          <Mark x={6} y={21}>=9</Mark>
          <path d="M-40 7L40-6" stroke={SKETCH_RED} />
          <path d="M-41 7l6-3 1 4zM41-7l-6-1 1 5z" fill={SKETCH_RED} stroke={SKETCH_RED} />
          <text transform="translate(40 -4) rotate(-8)" fontSize="11" fill="#d8262a">Ø10 mm</text>
        </>
      )}
      {joint && (
        <g>
          <circle cx="1" cy="47" r="5" fill="none" stroke="#9fa8f4" strokeWidth="1.200" />
          <path d="M-24 33h6" stroke={SKETCH_RED} strokeWidth="1.500" />
          <Corner x={-24} y={38} />
          <Mark x={-24} y={53}>{joint}</Mark>
          <text transform={`translate(-5 51) rotate(${flat ? 0 : -13})`} fontSize="11" fill="#d8262a">Ø1.35 mm</text>
          <circle cx="1" cy="47" r="3" fill={SKETCH_RED} />
          <circle cx="5" cy="51" r="2" fill="#0f0" />
        </g>
      )}
      {points.map(([px, py]) => <circle key={`${px},${py}`} cx={px} cy={py} r="2.200" fill="#0f0" />)}
      <circle r="2.200" fill="#0f0" />
    </g>
  );
}

const NavigationCube = () => (
  <g fill="#a0a2c0">
    <path d="M985 145l6 6h-12zM985 216l-6-7h12zM950 180l6-6v12zM1020 180l-6-6v12z" />
    <circle cx="1017" cy="148" r="3.200" />
    <path d="M975 149c-6 2-10 4-13 8l-3-2v9l9-3-3-2c3-3 7-5 11-6zM995 149c6 2 10 4 13 8l3-2v9l-9-3 3-2c-3-3-7-5-11-6z" />
    <rect x="969" y="164" width="32" height="33" rx="3" fill="#b9bcd2" stroke="#d3d5e4" />
    <rect x="972" y="167" width="26" height="27" fill="#c4c7dc" stroke="#777a90" />
    <path d="M972.500 176v17" stroke="#7fe08a" />
    <path d="M973 193.500h18" stroke="#e08080" />
    <path d="M968 197l2-2" stroke="#22f" strokeWidth="2" />
    <text x="986" y="183" fontSize="7" textAnchor="middle" fill="#111" stroke="#111" strokeWidth=".3">TOP</text>
    <path d="M997 204l5-2 6 2v7l-5 2-6-2z" fill="#9093b0" />
    <path d="M1003 206l5-2v7l-5 2z" fill="#6f7290" />
    <path d="M1010 206h6l-3 3z" fill="#4a4a60" />
  </g>
);

const AxisCross = () => (
  <g strokeWidth="1.200">
    <path d="M1005 501v-9" stroke="#188a18" />
    <path d="M1005 501h11" stroke="#a02020" />
    <path d="M1003 493l2-4 2 4z" fill="#128a12" />
    <path d="M1014 499l4 2-4 2z" fill="#a01818" />
    <circle cx="1005" cy="501" r="2" fill="#1818a0" />
    <g fontSize="6" fill="#222">
      <text x="1005" y="488">Y</text>
      <text x="1018" y="501">X</text>
      <text x="1006" y="501">Z</text>
    </g>
  </g>
);

const constraints = [1, 2, 3, 4, 5, 6, 7, 8, 9];

export default function App() {
  return (
    <Window>
      <GlobalStyle />
      <TitleBar>
        <Icon name="logo" size={14} />
        <AppTitle>FreeCAD 0.20.1</AppTitle>
        <CaptionButton aria-label="Minimize"><svg width="10" height="10"><path d="M1 5h8" stroke="#555" /></svg></CaptionButton>
        <CaptionButton aria-label="Restore"><svg width="10" height="10" fill="none" stroke="#333"><rect x="1.500" y="3" width="5.500" height="5.500" rx="1" /><path d="M3 1.500h4c1 0 1.500.5 1.500 1.500v4" /></svg></CaptionButton>
        <CaptionButton aria-label="Close"><svg width="10" height="10"><path d="M1 1l8 8M9 1l-8 8" stroke="#333" /></svg></CaptionButton>
      </TitleBar>
      <MenuBar>
        {menus.map((name) => <MenuItem key={name}>{name}</MenuItem>)}
      </MenuBar>
      <Toolbars>
        {rows.map((row) => <ToolRow key={row}>{row.split(' ').map(renderTool)}</ToolRow>)}
      </Toolbars>

      <Workspace>
        <Dock>
          <DockTitle>
            <span>コンボビュー</span>
            <svg width="8" height="8" fill="#777"><path d="M1 1h2v2h-2zM5 1h2v2h-2zM1 5h2v2h-2zM5 5h2v2h-2z" /></svg>
          </DockTitle>
          <TabList>
            <DockTab>モデル</DockTab>
            <DockTab $active><Icon name="pencil" size={12} />タスク</DockTab>
          </TabList>
          <DockScroll>
            <TaskColumn>
              <CloseButton>閉じる</CloseButton>
              <SectionHeader><Icon name="note" size={15} /><span lang="ja">ソルバーメッセージ</span><CollapseMark /></SectionHeader>
              <SectionHeader><Icon name="note" size={15} /><span>Edit controls</span><CollapseMark /></SectionHeader>
              <SectionHeader $open><Icon name="note" size={15} /><span>Constraints</span><CollapseMark /></SectionHeader>
              <SectionBody>
                <ControlRow>
                  <FilterField>
                    <FilterLabel htmlFor="filter">フィルター:</FilterLabel>
                    <DarkSelect id="filter" $small defaultValue="すべて"><option>すべて</option></DarkSelect>
                  </FilterField>
                  <SmallButton>複数選択</SmallButton>
                  <SmallButton aria-label="Settings"><Icon name="tools" size={14} /></SmallButton>
                </ControlRow>
                <ControlRow>
                  <SmallButton>Show Listed</SmallButton>
                  <SmallButton>Hide Listed</SmallButton>
                  <VisibilityButton>
                    Restrict Visibility
                    <svg width="8" height="6"><path d="M0 1h8l-4 4z" fill="#fff" /></svg>
                  </VisibilityButton>
                </ControlRow>
                <ConstraintPanel>
                  <ConstraintList>
                    {constraints.map((n) => (
                      <ConstraintRow key={n}>
                        <label>
                          <CheckBox type="checkbox" defaultChecked />
                          <Icon name={n < 7 ? 'coincident' : 'equal'} size={16} />
                          Constraint{n}
                        </label>
                      </ConstraintRow>
                    ))}
                  </ConstraintList>
                  <ListScroll><Chevron color="#eee" up /><span /><Chevron color="#eee" /></ListScroll>
                </ConstraintPanel>
              </SectionBody>
            </TaskColumn>
            <ScrollBar><Chevron color="#ddd" up /><span /><Chevron color="#ddd" /></ScrollBar>
          </DockScroll>
        </Dock>
        <Splitter><span /></Splitter>
        <Documents>
          <Viewport>
            <Canvas viewBox="242 141 782 378" role="img" aria-label="Sketch view">
              <path d="M242 417h782" stroke="#b8636f" />
              <path d="M510 141v379" stroke="#93d8a0" strokeWidth="2" />
              {hexagons.map((hex) => <Hexagon key={hex.x} {...hex} />)}
              <NavigationCube />
              <AxisCross />
            </Canvas>
          </Viewport>
          <DocumentTabs>
            <DocumentTab>
              <Icon name="logo" size={15} />
              <span>Unnamed : 1*</span>
              <svg width="9" height="9"><path d="M1 1l7 7M8 1l-7 7" stroke="#222" strokeWidth="1.500" /></svg>
            </DocumentTab>
          </DocumentTabs>
        </Documents>
      </Workspace>

      <StatusBar>
        <p>Preselected: Unnamed.Body.Sketch.Edge1 (-2.459977 mm,3.579731 mm,8.000000 μm)</p>
        <StatusDivider />
        <NavButton>
          <svg width="8" height="10" fill="none" stroke="#3a4444"><rect x="1" y="1" width="6" height="8" rx="3" /><path d="M4 1v3" /></svg>
          CAD
        </NavButton>
        <StatusDivider />
        <StatusSize>92.71 mm x 44.93 mm</StatusSize>
      </StatusBar>
    </Window>
  );
}
